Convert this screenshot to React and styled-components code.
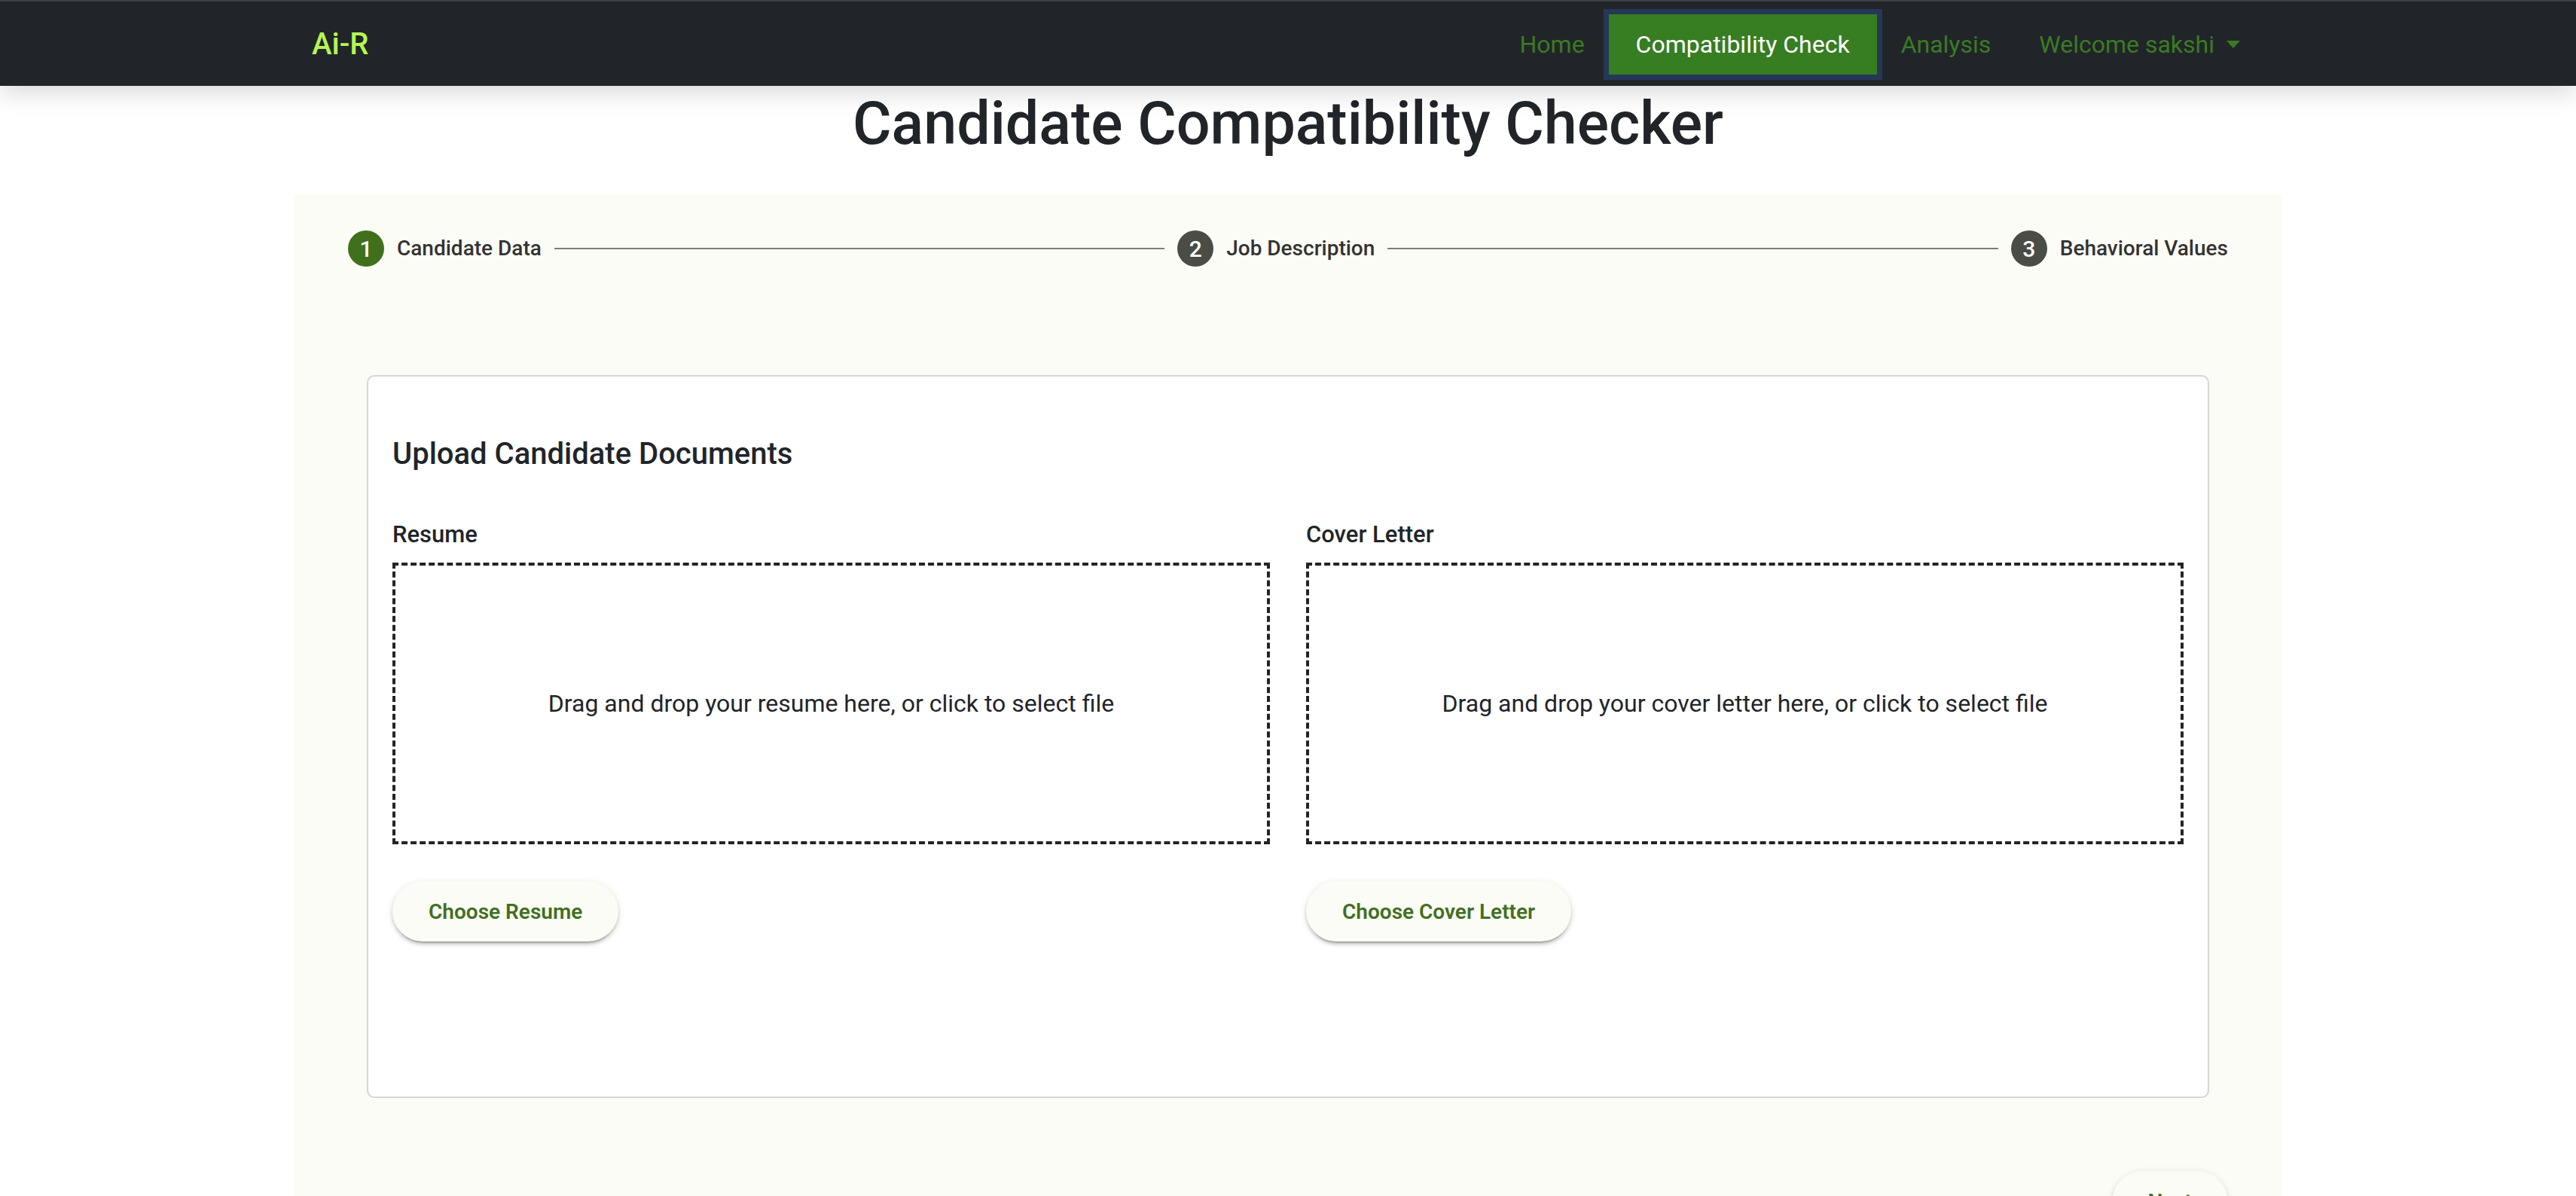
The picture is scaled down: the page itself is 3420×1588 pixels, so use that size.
import React from 'react';
import styled, { createGlobalStyle } from 'styled-components';

const COLORS = {
  dark: '#212529',
  navGreen: '#3a7b23',
  activeGreen: '#377d22',
  ring: '#263757',
  lime: '#b6f553',
  beige: '#fcfcf6',
  text: '#212529',
  stepGreen: '#41701c',
  stepGray: '#4a4d45',
  connector: '#7b7e72',
  btnGreen: '#41701f',
  border: '#d6d6d6',
};

const GlobalStyle = createGlobalStyle`
  html, body {
    margin: 0;
    padding: 0;
    background: #fff;
  }
  body {
    font-family: Roboto, "Liberation Sans", Arial, sans-serif;
    color: ${COLORS.text};
  }
  * {
    box-sizing: border-box;
  }
`;

const Navbar = styled.nav`
  position: relative;
  z-index: 2;
  height: 114px;
  background: ${COLORS.dark};
  border-top: 2px solid #3b4046;
  box-shadow: 0 8px 32px rgba(0, 0, 0, 0.16);
`;

const NavInner = styled.div`
  width: 2640px;
  height: 100%;
  margin: 0 auto;
  padding: 2px 24px 0;
  display: flex;
  align-items: center;
  justify-content: space-between;
`;

const Brand = styled.a`
  font-size: 40px;
  font-weight: 500;
  line-height: 48px;
  color: ${COLORS.lime};
  text-decoration: none;
`;

const NavList = styled.ul`
  display: flex;
  align-items: center;
  list-style: none;
  margin: 0;
  padding: 0;
`;

const NavLink = styled.a`
  display: flex;
  align-items: center;
  height: ${p => (p.active ? '80px' : '48px')};
  padding: 0 ${p => (p.active ? '36px' : '32px')};
  font-size: 32px;
  line-height: 48px;
  color: ${p => (p.active ? '#fff' : COLORS.navGreen)};
  background: ${p => (p.active ? COLORS.activeGreen : 'transparent')};
  box-shadow: ${p => (p.active ? `0 0 0 7px ${COLORS.ring}` : 'none')};
  text-decoration: none;
  cursor: pointer;
`;

const Caret = styled.span`
  display: inline-block;
  margin-left: 16px;
  border-top: 10px solid ${COLORS.navGreen};
  border-left: 9px solid transparent;
  border-right: 9px solid transparent;
`;

const Title = styled.h1`
  margin: 2px 0 45px;
  font-size: 79px;
  font-weight: 500;
  line-height: 96px;
  text-align: center;
  color: ${COLORS.text};
`;

const Wrapper = styled.section`
  width: 2640px;
  margin: 0 auto;
  padding: 49px 72px 60px;
  background: ${COLORS.beige};
`;

const Stepper = styled.div`
  display: flex;
  align-items: center;
`;

const Step = styled.div`
  display: flex;
  align-items: center;
  gap: 17px;
`;

const StepCircle = styled.span`
  width: 48px;
  height: 48px;
  border-radius: 50%;
  background: ${p => (p.active ? COLORS.stepGreen : COLORS.stepGray)};
  color: #fff;
  font-size: 30px;
  font-weight: 500;
  display: flex;
  align-items: center;
  justify-content: center;
`;

const StepLabel = styled.span`
  font-size: 28px;
  font-weight: 500;
  line-height: 40px;
  color: #333;
`;

const Connector = styled.span`
  flex: 1;
  height: 2px;
  margin: 0 17px;
  background: ${COLORS.connector};
`;

const Card = styled.div`
  margin: 144px 25px 0;
  min-height: 960px;
  padding: 79px 32px 32px;
  background: #fff;
  border: 2px solid ${COLORS.border};
  border-radius: 10px;
`;

const CardTitle = styled.h5`
  margin: 0;
  font-size: 40px;
  font-weight: 500;
  line-height: 48px;
`;

const Columns = styled.div`
  display: grid;
  grid-template-columns: 1fr 1fr;
  column-gap: 48px;
  margin-top: 61px;
`;

const Column = styled.div`
  display: flex;
  flex-direction: column;
  align-items: flex-start;
`;

const Label = styled.label`
  font-size: 31px;
  font-weight: 500;
  line-height: 44px;
  margin-bottom: 15px;
`;

const DropZone = styled.div`
  width: 100%;
  height: 374px;
  border: 4px dashed ${COLORS.text};
  display: flex;
  align-items: center;
  justify-content: center;
  font-size: 32px;
  line-height: 48px;
  cursor: pointer;
`;

const PillButton = styled.button`
  height: 80px;
  margin-top: ${p => (p.flush ? '0' : '49px')};
  padding: 0 48px;
  border: none;
  border-radius: 40px;
  background: ${COLORS.beige};
  color: ${COLORS.btnGreen};
  font-family: inherit;
  font-size: 28px;
  font-weight: 600;
  cursor: pointer;
  box-shadow: 0 6px 2px -4px rgba(0, 0, 0, 0.2), 0 4px 4px 0 rgba(0, 0, 0, 0.14),
    0 2px 10px 0 rgba(0, 0, 0, 0.12);
`;

const Footer = styled.div`
  display: flex;
  justify-content: flex-end;
  margin-top: 97px;
`;

const steps = ['Candidate Data', 'Job Description', 'Behavioral Values'];

const uploads = [
  { label: 'Resume', hint: 'resume', button: 'Choose Resume' },
  { label: 'Cover Letter', hint: 'cover letter', button: 'Choose Cover Letter' },
];

export default function App() {
  return (
    <>
      <GlobalStyle />
      <Navbar>
        <NavInner>
          <Brand>Ai-R</Brand>
          <NavList>
            <li><NavLink>Home</NavLink></li>
            <li><NavLink active>Compatibility Check</NavLink></li>
            <li><NavLink>Analysis</NavLink></li>
            <li>
              <NavLink>
                Welcome sakshi
                <Caret />
              </NavLink>
            </li>
          </NavList>
        </NavInner>
      </Navbar>

      <Title>Candidate Compatibility Checker</Title>

      <Wrapper>
        <Stepper>
          {steps.map((s, i) => (
            <React.Fragment key={s}>
              {i > 0 && <Connector />}
              <Step>
                <StepCircle active={i === 0}>{i + 1}</StepCircle>
                <StepLabel>{s}</StepLabel>
              </Step>
            </React.Fragment>
          ))}
        </Stepper>

        <Card>
          <CardTitle>Upload Candidate Documents</CardTitle>
          <Columns>
            {uploads.map(u => (
              <Column key={u.label}>
                <Label>{u.label}</Label>
                <DropZone>
                  Drag and drop your {u.hint} here, or click to select file
                </DropZone>
                <PillButton>{u.button}</PillButton>
              </Column>
            ))}
          </Columns>
        </Card>

        <Footer>
          <PillButton flush>Next</PillButton>
        </Footer>
      </Wrapper>
    </>
  );
}
